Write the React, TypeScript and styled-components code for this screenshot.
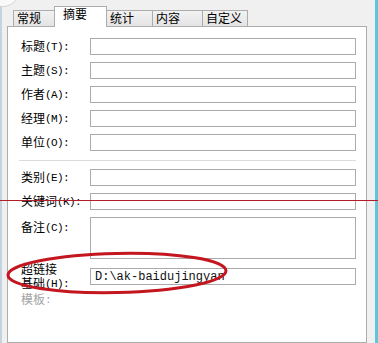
import React from 'react';
import styled, { createGlobalStyle } from 'styled-components';

const GlobalStyle = createGlobalStyle`
  html, body {
    margin: 0;
    padding: 0;
    background: #f0f0f0;
    overflow: hidden;
  }
  body {
    font-family: "Noto Sans CJK SC", "Noto Sans", sans-serif;
  }
`;

const Page = styled.div`
  position: relative;
  width: 378px;
  height: 343px;
  overflow: hidden;
`;

const Window = styled.div`
  box-sizing: border-box;
  width: 378px;
  height: 343px;
  display: flex;
  flex-direction: column;
  padding: 6px 8px 0 5px;
  background: #f0f0f0;
  border-left: 2px solid #c3d3e0;
  border-right: 3px solid #5ec5da;
`;

const CornerKnob = styled.div`
  position: absolute;
  left: -14px;
  top: -27px;
  width: 32px;
  height: 32px;
  border-radius: 50%;
  border: 1px solid #d4d4d4;
  background: #f9f9f9;
`;

const TabRow = styled.div`
  display: flex;
  align-items: flex-end;
  height: 20px;
  padding-left: 6px;
`;

const Tab = styled.div<{ $w: number; $active?: boolean }>`
  box-sizing: border-box;
  position: relative;
  width: ${p => p.$w}px;
  height: ${p => (p.$active ? 21 : 16)}px;
  margin-right: -1px;
  margin-bottom: ${p => (p.$active ? -1 : 0)}px;
  z-index: ${p => (p.$active ? 2 : 1)};
  padding-left: ${p => (p.$active ? 8 : 3)}px;
  border: 1px solid #acacac;
  border-bottom: none;
  background: ${p => (p.$active ? '#ffffff' : 'linear-gradient(#f2f2f2, #e4e4e4)')};
  font-size: 12px;
  line-height: 14px;
  color: #000;
  white-space: nowrap;
`;

const Panel = styled.div`
  flex: 1;
  display: flex;
  flex-direction: column;
  padding: 11px 10px 0 13px;
  background: #ffffff;
  border: 1px solid #adadad;
`;

const Row = styled.div<{ $gap?: number; $top?: boolean }>`
  display: flex;
  align-items: ${p => (p.$top ? 'flex-start' : 'center')};
  margin-top: ${p => p.$gap ?? 7}px;
`;

const Label = styled.div<{ $muted?: boolean; $pad?: number }>`
  width: 69px;
  flex-shrink: 0;
  font-size: 12px;
  line-height: 14px;
  padding-top: ${p => p.$pad ?? 0}px;
  color: ${p => (p.$muted ? '#a3a3a3' : '#000')};
  white-space: nowrap;
`;

const Key = styled.span`
  font-family: "Liberation Mono", monospace;
  font-size: 11px;
  letter-spacing: -0.6px;
  vertical-align: 1px;
`;

const Field = styled.input`
  box-sizing: border-box;
  flex: 1;
  min-width: 0;
  height: 17px;
  margin: 0;
  padding: 0 4px;
  border: 1px solid #ababab;
  background: #fff;
  outline: none;
  font-family: "Liberation Mono", monospace;
  font-size: 12px;
  color: #111;
`;

const Notes = styled.textarea`
  box-sizing: border-box;
  flex: 1;
  height: 42px;
  margin: 0;
  padding: 2px 4px;
  border: 1px solid #ababab;
  resize: none;
  outline: none;
  font-family: "Liberation Mono", monospace;
  font-size: 12px;
`;

const Separator = styled.div`
  height: 1px;
  margin: 9px 0 1px -2px;
  background: #dcdcdc;
`;

const RedLine = styled.div`
  position: absolute;
  left: 0;
  top: 200px;
  width: 378px;
  height: 1px;
  background: #b31d27;
`;

const Marker = styled.svg`
  position: absolute;
  left: 0;
  top: 248px;
`;

const tabs = [
  { name: '常规', w: 42 },
  { name: '摘要', w: 53, active: true },
  { name: '统计', w: 47 },
  { name: '内容', w: 51 },
  { name: '自定义', w: 46 },
];

const topFields = [
  ['标题', '(T):'],
  ['主题', '(S):'],
  ['作者', '(A):'],
  ['经理', '(M):'],
  ['单位', '(O):'],
];

const App: React.FC = () => {
  return (
    <Page>
      <GlobalStyle />
      <Window>
        <TabRow>
          {tabs.map(t => (
            <Tab key={t.name} $w={t.w} $active={t.active}>
              {t.name}
            </Tab>
          ))}
        </TabRow>
        <Panel>
          {topFields.map(([name, key], i) => (
            <Row key={name} $gap={i === 0 ? 0 : 7}>
              <Label>
                {name}
                <Key>{key}</Key>
              </Label>
              <Field readOnly value="" />
            </Row>
          ))}
          <Separator />
          <Row>
            <Label>
              类别<Key>(E):</Key>
            </Label>
            <Field readOnly value="" />
          </Row>
          <Row>
            <Label>
              关键词<Key>(K):</Key>
            </Label>
            <Field readOnly value="" />
          </Row>
          <Row $top>
            <Label $pad={3}>
              备注<Key>(C):</Key>
            </Label>
            <Notes readOnly value="" />
          </Row>
          <Row $gap={3}>
            <Label>
              超链接
              <br />
              基础<Key>(H):</Key>
            </Label>
            <Field readOnly value="D:\ak-baidujingyan" />
          </Row>
          <Row $gap={1}>
            <Label $muted>
              模板<Key>:</Key>
            </Label>
          </Row>
        </Panel>
      </Window>
      <CornerKnob />
      <RedLine />
      <Marker width="240" height="50" viewBox="0 0 240 50">
        <ellipse
          cx="117"
          cy="25"
          rx="109"
          ry="19.5"
          fill="none"
          stroke="#c3161f"
          strokeWidth="3"
          transform="rotate(-1.2 117 25)"
        />
      </Marker>
    </Page>
  );
};

export default App;
